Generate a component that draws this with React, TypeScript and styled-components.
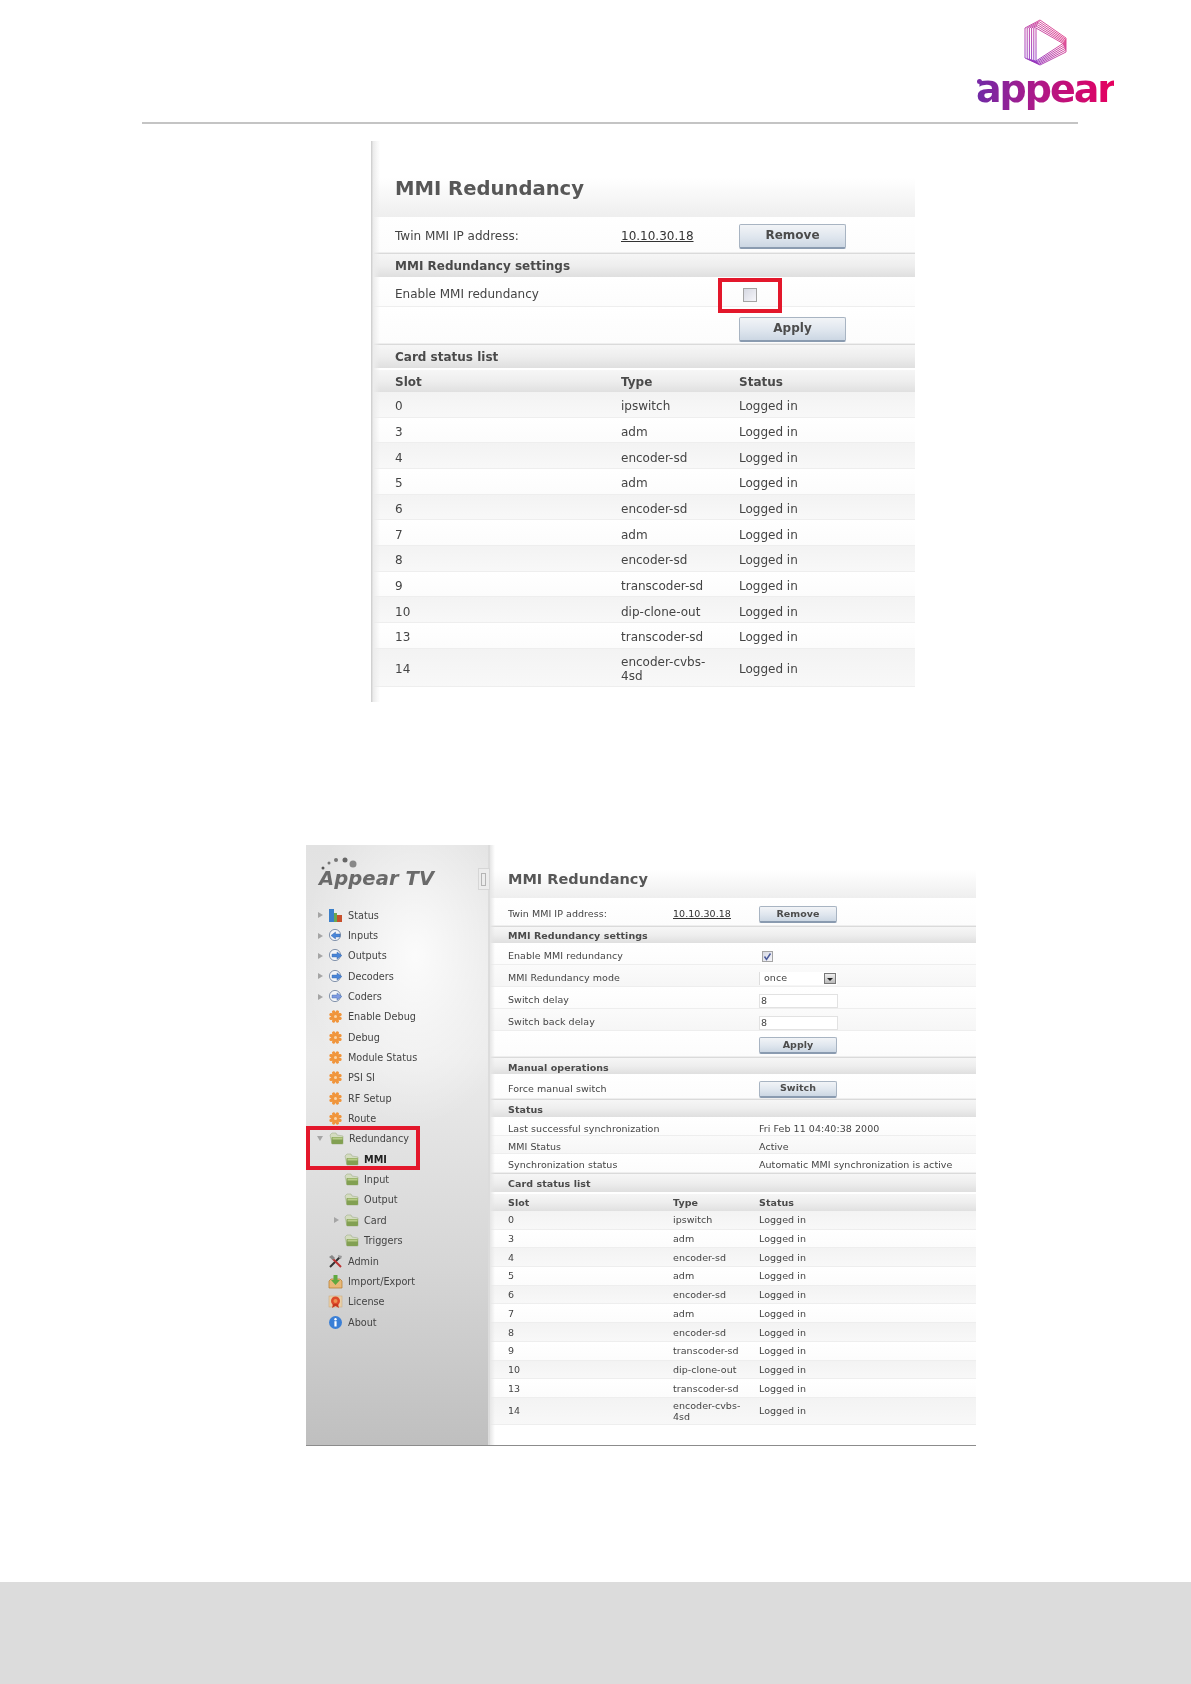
import React from "react";
import styled, { createGlobalStyle, ThemeProvider } from "styled-components";

const Global = createGlobalStyle`
  html, body { margin: 0; padding: 0; background: #fff; }
  body { font-family: "DejaVu Sans", Verdana, sans-serif; }
`;

const big = { font: 12, letter: 0, title: 19.6, titleLift: 18, pad: 24, col1: 226, col2: 118, typeMax: 100, btnW: 107, btnH: 25, btnFont: 12, valueShift: 118 };
const small = { font: 9.5, letter: 0.05, title: 14.5, titleLift: 10, pad: 18, col1: 165, col2: 86, typeMax: 80, btnW: 78, btnH: 17, btnFont: 9.5, valueShift: 86 };

const Page = styled.div`
  width: 1191px;
  height: 1684px;
  display: flex;
  flex-direction: column;
  overflow: hidden;
`;
const Header = styled.header`
  height: 124px;
  margin: 0 113px 0 142px;
  padding: 19px 0 0;
  box-sizing: border-box;
  border-bottom: 2px solid #c4c4c4;
  display: flex;
  justify-content: flex-end;
`;
const Brand = styled.div`
  margin-right: -37px;
  width: 140px;
  display: flex;
  flex-direction: column;
  align-items: center;
  position: relative;
`;
const Word = styled.div`
  font-family: "DejaVu Sans", sans-serif;
  font-weight: 700;
  font-size: 38px;
  line-height: 44px;
  margin-top: 1px;
  letter-spacing: -2px;
  background: linear-gradient(90deg, #6f2aa6 0%, #a81b8c 40%, #e6005e 100%);
  -webkit-background-clip: text;
  background-clip: text;
  color: transparent;
`;
const BrandDot = styled.span`
  position: absolute;
  left: 2px;
  top: 60px;
  width: 5px;
  height: 5px;
  border-radius: 50%;
  background: #7a2aa6;
`;

const TopShot = styled.section`
  position: relative;
  margin: 17px 0 0 371px;
  width: 544px;
  height: 561px;
  padding-top: 37px;
  box-sizing: border-box;
  filter: blur(0.35px);
  &::before {
    content: "";
    position: absolute;
    left: 0; top: 0; bottom: 0;
    width: 9px;
    background: linear-gradient(90deg, #c9c9c9 0, #ececec 25%, rgba(255,255,255,0) 100%);
    pointer-events: none;
    z-index: 2;
  }
`;
const LowerShot = styled.section`
  position: relative;
  margin: 143px 0 0 306px;
  width: 670px;
  height: 600px;
  display: flex;
  border-bottom: 1px solid #8c8c8c;
  filter: blur(0.3px);
`;
const Sidebar = styled.nav`
  width: 184px;
  flex: none;
  box-sizing: border-box;
  padding-top: 60px;
  background:
    radial-gradient(ellipse 110px 170px at 60% 110px, rgba(255,255,255,0.85), rgba(255,255,255,0) 100%),
    linear-gradient(180deg, #e2e2e2 0%, #ebebeb 35%, #d6d6d6 70%, #bfbfbf 100%);
  border-right: 2px solid #dcdcdc;
  position: relative;
`;
const SideLogo = styled.div`
  position: absolute;
  left: 13px;
  top: 21px;
  font-family: "DejaVu Sans", sans-serif;
  font-weight: 700;
  font-style: italic;
  font-size: 19.5px;
  line-height: 26px;
  letter-spacing: 0.1px;
  color: #6a6a6a;
`;
const LogoDots = styled.svg`
  position: absolute;
  left: 15px;
  top: 12px;
`;
const Handle = styled.div`
  position: absolute;
  right: -2px;
  top: 23px;
  width: 12px;
  height: 22px;
  box-sizing: border-box;
  border: 1px solid #d6d6d6;
  background: #ececec;
  &::after {
    content: "";
    position: absolute;
    left: 2px; top: 4px;
    width: 3px; height: 11px;
    border: 1px solid #b4b4b4;
  }
`;
const NavRow = styled.div<{ $level: number }>`
  height: 20.35px;
  display: flex;
  align-items: center;
  padding-left: ${(p) => 11 + p.$level * 16}px;
  font-size: 9.7px;
  color: #3f3f3f;
`;
const Arrow = styled.span<{ $open?: boolean; $hidden?: boolean }>`
  width: 0;
  height: 0;
  flex: none;
  margin-right: 6px;
  visibility: ${(p) => (p.$hidden ? "hidden" : "visible")};
  ${(p) =>
    p.$open
      ? "border-left:3px solid transparent;border-right:3px solid transparent;border-top:5px solid #a5a5a5;"
      : "border-top:3px solid transparent;border-bottom:3px solid transparent;border-left:5px solid #a5a5a5;margin-left:1px;margin-right:5px;"}
`;
const NavIcon = styled.svg`
  width: 15px;
  height: 15px;
  flex: none;
  margin-right: 5px;
`;
const NavLabel = styled.span<{ $bold?: boolean }>`
  font-weight: ${(p) => (p.$bold ? 700 : 400)};
  color: ${(p) => (p.$bold ? "#222" : "#444")};
  white-space: nowrap;
`;

const Content = styled.div`
  position: relative;
  flex: 1;
  padding-top: 25px;
  min-width: 0;
  background: #fff;
  &::before {
    content: "";
    position: absolute;
    left: 0; top: 0; bottom: 0;
    width: 5px;
    background: linear-gradient(90deg, #e6e6e6, rgba(255,255,255,0));
    pointer-events: none;
  }
`;
const Title = styled.div<{ $h: number }>`
  height: ${(p) => p.$h}px;
  box-sizing: border-box;
  display: flex;
  align-items: center;
  padding-left: ${(p) => p.theme.pad}px;
  padding-bottom: ${(p) => p.theme.titleLift}px;
  font-weight: 700;
  font-size: ${(p) => p.theme.title}px;
  color: #575757;
  background: linear-gradient(180deg, #fff 0%, #f6f6f6 55%, #eeeeee 100%);
`;
const Row = styled.div<{ $h: number; $n?: number; $tone?: "plain" | "alt" | "none" }>`
  height: ${(p) => p.$h}px;
  display: grid;
  grid-template-columns: ${(p) => p.theme.col1}px ${(p) => p.theme.col2}px 1fr;
  align-items: center;
  padding-left: ${(p) => p.theme.pad}px;
  padding-top: ${(p) => (p.$n ?? 0) * 2}px;
  box-sizing: border-box;
  font-size: ${(p) => p.theme.font}px;
  letter-spacing: ${(p) => p.theme.letter}px;
  line-height: 1.15;
  color: #444;
  border-bottom: 1px solid #eeeeee;
  background: ${(p) =>
    p.$tone === "alt"
      ? "linear-gradient(180deg, #f3f3f3 0%, #f8f8f8 100%)"
      : p.$tone === "none"
      ? "linear-gradient(180deg, #fbfbfb 0%, #f6f6f6 100%)"
      : "linear-gradient(180deg, #ffffff 0%, #fcfcfc 100%)"};
`;
const Section = styled.div<{ $h: number; $n?: number }>`
  height: ${(p) => p.$h}px;
  display: flex;
  align-items: center;
  box-sizing: border-box;
  padding-left: ${(p) => p.theme.pad}px;
  padding-top: ${(p) => (p.$n ?? 0) * 2}px;
  font-weight: 700;
  font-size: ${(p) => p.theme.font}px;
  letter-spacing: ${(p) => p.theme.letter}px;
  color: #4a4a4a;
  border-top: 1px solid #dadada;
  background: linear-gradient(180deg, #f6f6f6 0%, #eeeeee 50%, #dfdfdf 100%);
`;
const HeadRow = styled(Row)`
  font-weight: 700;
  border-top: 2px solid #fff;
  border-bottom: none;
  color: #4a4a4a;
  background: linear-gradient(180deg, #f6f6f6 0%, #eeeeee 50%, #e0e0e0 100%);
`;
const Cell = styled.span``;
const TypeCell = styled.span`
  max-width: ${(p) => p.theme.typeMax}px;
`;
const WideCell = styled.span`
  grid-column: 3;
`;
const FullValue = styled.span`
  grid-column: 2 / 4;
  padding-left: ${(p) => p.theme.valueShift}px;
  white-space: nowrap;
`;
const Address = styled.span`
  text-decoration: underline;
  color: #333;
`;
const Button = styled.div`
  grid-column: 3;
  width: ${(p) => p.theme.btnW}px;
  height: ${(p) => p.theme.btnH}px;
  box-sizing: border-box;
  display: flex;
  align-items: center;
  justify-content: center;
  font-weight: 700;
  font-size: ${(p) => p.theme.btnFont}px;
  color: #4c4c4c;
  border: 1px solid #a8b4c2;
  border-bottom: 2px solid #8a9bb0;
  border-radius: 2px;
  background: linear-gradient(180deg, #f2f4f7 0%, #dfe6ee 55%, #ccd7e3 100%);
`;
const Check = styled.span<{ $size: number; $shift: number }>`
  grid-column: 3;
  margin-left: ${(p) => p.$shift}px;
  width: ${(p) => p.$size}px;
  height: ${(p) => p.$size}px;
  box-sizing: border-box;
  border: 1px solid #a4a4a4;
  background: linear-gradient(135deg, #d6d8e2, #f6f6fa);
  display: flex;
  align-items: center;
  justify-content: center;
`;
const Select = styled.div`
  grid-column: 3;
  width: 78px;
  height: 13px;
  box-sizing: border-box;
  display: flex;
  align-items: center;
  justify-content: space-between;
  padding: 0 1px 0 4px;
  background: #fff;
  border-left: 1px solid #ddd;
  font-size: 9.5px;
`;
const SelectBtn = styled.span`
  width: 12px;
  height: 11px;
  box-sizing: border-box;
  border: 1px solid #777;
  background: linear-gradient(180deg, #eee, #bbb);
  display: flex;
  align-items: center;
  justify-content: center;
  &::after {
    content: "";
    border-left: 3px solid transparent;
    border-right: 3px solid transparent;
    border-top: 3px solid #222;
    margin-top: 2px;
  }
`;
const Field = styled.div`
  grid-column: 3;
  width: 79px;
  height: 14px;
  box-sizing: border-box;
  border: 1px solid #e2e2e2;
  background: #fff;
  padding-left: 1px;
  line-height: 12px;
  font-size: 9.5px;
`;
const RedBox = styled.div`
  position: absolute;
  border: 4px solid #e3172b;
  box-sizing: border-box;
  z-index: 3;
  pointer-events: none;
`;
const TopRedBox = styled(RedBox)`
  left: 347px;
  top: 137px;
  width: 64px;
  height: 35px;
`;
const NavRedBox = styled(RedBox)`
  left: 0;
  top: 281px;
  width: 114px;
  height: 44px;
`;
const Footer = styled.footer`
  margin-top: auto;
  height: 102px;
  background: #dcdcdc;
`;

const burst = Array.from({ length: 8 }, (_, i) => {
  const a = (i * Math.PI) / 4 + Math.PI / 8;
  return `M7.5 7.5L${(7.5 + 5 * Math.cos(a)).toFixed(1)} ${(7.5 + 5 * Math.sin(a)).toFixed(1)}`;
}).join("");

type Kind = "bars" | "in" | "out" | "coder" | "gear" | "folder" | "tools" | "box" | "cert" | "info";

function Icon({ kind }: { kind: Kind }) {
  return (
    <NavIcon viewBox="0 0 15 15">
      {kind === "bars" && (
        <>
          <rect x="1" y="1" width="5" height="13" fill="#3b7fc9" />
          <rect x="6" y="5" width="3" height="9" fill="#6aa84f" />
          <rect x="9" y="7" width="5" height="7" fill="#c8502c" />
        </>
      )}
      {(kind === "in" || kind === "out" || kind === "coder") && (
        <>
          <circle cx="7" cy="7" r="5.6" fill="#f2f4f8" stroke="#8494ac" strokeWidth="1" />
          <path
            d={kind === "in" ? "M12 6H7.500V4L3 7.500l4.500 3.500V9H12z" : "M4 6h5V4l5 3.500-5 3.500V9H4z"}
            fill={kind === "coder" ? "#7f9be0" : "#4a86d8"}
            stroke="#2f5fa8"
            strokeWidth="0.4"
          />
        </>
      )}
      {kind === "gear" && (
        <>
          <path d={burst} stroke="#f0953c" strokeWidth="3.200" strokeLinecap="round" />
          <circle cx="7.5" cy="7.5" r="1.500" fill="#fbd6a8" />
        </>
      )}
      {kind === "folder" && (
        <>
          <path d="M1 4l2-2 4 0 1 2 6 1v8H3z" fill="#d4dcc0" stroke="#98a880" strokeWidth="0.5" />
          <rect x="2.5" y="6" width="11.5" height="7" rx="1" fill="#82a052" />
          <rect x="3.5" y="6.5" width="10" height="2" fill="#b8cc88" />
        </>
      )}
      {kind === "tools" && (
        <>
          <path d="M2 13L12 3" stroke="#333" strokeWidth="2" />
          <path d="M13 13L4 4" stroke="#b33" strokeWidth="2" />
          <path d="M1 3l3-2 3 3-2 2z" fill="#888" />
          <path d="M10 1l4 1-1 3-2-1z" fill="#999" />
        </>
      )}
      {kind === "box" && (
        <>
          <path d="M1 7l2-2h9l2 2v7H1z" fill="#e8b878" stroke="#b57a2a" strokeWidth="0.7" />
          <path d="M5.500 1h4v5h2.500l-4.500 5-4.500-5h2.500z" fill="#5fa83f" />
        </>
      )}
      {kind === "cert" && (
        <>
          <rect x="1" y="2" width="13" height="11" fill="#e8cfa8" stroke="#c9a678" strokeWidth="0.5" />
          <circle cx="7.500" cy="7" r="4.500" fill="#dc4a2a" />
          <circle cx="7.500" cy="7" r="2" fill="#f09050" />
          <path d="M5 10l-1 4 3.500-2 3.500 2-1-4z" fill="#c8371e" />
        </>
      )}
      {kind === "info" && (
        <>
          <circle cx="7.5" cy="7.5" r="6.5" fill="#3a7fd6" />
          <circle cx="7.5" cy="4.2" r="1.2" fill="#fff" />
          <rect x="6.4" y="6.2" width="2.2" height="5.300" fill="#fff" />
        </>
      )}
    </NavIcon>
  );
}

const nav: { label: string; kind: Kind; level?: number; arrow?: boolean; open?: boolean; bold?: boolean }[] = [
  { label: "Status", kind: "bars", arrow: true },
  { label: "Inputs", kind: "in", arrow: true },
  { label: "Outputs", kind: "out", arrow: true },
  { label: "Decoders", kind: "out", arrow: true },
  { label: "Coders", kind: "coder", arrow: true },
  { label: "Enable Debug", kind: "gear" },
  { label: "Debug", kind: "gear" },
  { label: "Module Status", kind: "gear" },
  { label: "PSI SI", kind: "gear" },
  { label: "RF Setup", kind: "gear" },
  { label: "Route", kind: "gear" },
  { label: "Redundancy", kind: "folder", arrow: true, open: true },
  { label: "MMI", kind: "folder", level: 1, bold: true },
  { label: "Input", kind: "folder", level: 1 },
  { label: "Output", kind: "folder", level: 1 },
  { label: "Card", kind: "folder", level: 1, arrow: true },
  { label: "Triggers", kind: "folder", level: 1 },
  { label: "Admin", kind: "tools" },
  { label: "Import/Export", kind: "box" },
  { label: "License", kind: "cert" },
  { label: "About", kind: "info" },
];

const cards: [string, string][] = [
  ["0", "ipswitch"],
  ["3", "adm"],
  ["4", "encoder-sd"],
  ["5", "adm"],
  ["6", "encoder-sd"],
  ["7", "adm"],
  ["8", "encoder-sd"],
  ["9", "transcoder-sd"],
  ["10", "dip-clone-out"],
  ["13", "transcoder-sd"],
  ["14", "encoder-cvbs-4sd"],
];

function CardRows({ h, last, n }: { h: number; last: number; n: number }) {
  return (
    <>
      {cards.map(([slot, type], i) => (
        <Row key={slot} $h={i === cards.length - 1 ? last : h} $n={n} $tone={i % 2 === 0 ? "alt" : "plain"}>
          <Cell>{slot}</Cell>
          <TypeCell>{type}</TypeCell>
          <Cell>Logged in</Cell>
        </Row>
      ))}
    </>
  );
}

function LogoMark() {
  const outer = [[1, 9], [16, 1], [42, 19], [42, 33], [16, 46], [1, 39]];
  const inner = [[12, 9], [12, 9], [39, 24.500], [39, 24.500], [12, 42], [12, 42]];
  const lines = [0, 0.2, 0.4, 0.6, 0.8, 1].map((t) =>
    outer.map((p, i) => `${(p[0] + (inner[i][0] - p[0]) * t).toFixed(1)},${(p[1] + (inner[i][1] - p[1]) * t).toFixed(1)}`).join(" ")
  );
  return (
    <svg width="43" height="47" viewBox="0 0 43 47" fill="none">
      <defs>
        <linearGradient id="lg" x1="0" y1="1" x2="1" y2="0">
          <stop offset="0" stopColor="#8a2fc0" />
          <stop offset="1" stopColor="#f2407c" />
        </linearGradient>
      </defs>
      {lines.map((pts) => (
        <polygon key={pts} points={pts} stroke="url(#lg)" strokeWidth="0.9" strokeLinejoin="round" />
      ))}
    </svg>
  );
}

export default function App() {
  return (
    <Page>
      <Global />
      <Header>
        <Brand>
          <LogoMark />
          <Word>appear</Word>
          <BrandDot />
        </Brand>
      </Header>

      <ThemeProvider theme={big}>
        <TopShot>
          <Title $h={39}>MMI Redundancy</Title>
          <Row $h={36} $n={2}>
            <Cell>Twin MMI IP address:</Cell>
            <Address>10.10.30.18</Address>
            <Button>Remove</Button>
          </Row>
          <Section $h={24}>MMI Redundancy settings</Section>
          <Row $h={30} $n={3}>
            <Cell>Enable MMI redundancy</Cell>
            <Cell />
            <Check $size={14} $shift={4} />
          </Row>
          <Row $h={37} $n={4} $tone="plain">
            <Cell />
            <Cell />
            <Button>Apply</Button>
          </Row>
          <Section $h={24}>Card status list</Section>
          <HeadRow $h={24} $n={2}>
            <Cell>Slot</Cell>
            <Cell>Type</Cell>
            <Cell>Status</Cell>
          </HeadRow>
          <CardRows h={25.67} last={38} n={3} />
          <TopRedBox />
        </TopShot>
      </ThemeProvider>

      <ThemeProvider theme={small}>
        <LowerShot>
          <Sidebar>
            <LogoDots width="40" height="14" viewBox="0 0 40 14">
              <circle cx="2" cy="11" r="1.500" fill="#555" />
              <circle cx="8" cy="6" r="1.500" fill="#777" />
              <circle cx="15" cy="3" r="2" fill="#777" />
              <circle cx="24" cy="3" r="2.500" fill="#666" />
              <circle cx="32" cy="7" r="3.500" fill="#888" />
            </LogoDots>
            <SideLogo>Appear TV</SideLogo>
            <Handle />
            {nav.map((n) => (
              <NavRow key={n.label} $level={n.level ?? 0}>
                <Arrow $open={n.open} $hidden={!n.arrow} />
                <Icon kind={n.kind} />
                <NavLabel $bold={n.bold}>{n.label}</NavLabel>
              </NavRow>
            ))}
            <NavRedBox />
          </Sidebar>
          <Content>
            <Title $h={28}>MMI Redundancy</Title>
            <Row $h={28} $n={3}>
              <Cell>Twin MMI IP address:</Cell>
              <Address>10.10.30.18</Address>
              <Button>Remove</Button>
            </Row>
            <Section $h={17}>MMI Redundancy settings</Section>
            <Row $h={22} $n={3}>
              <Cell>Enable MMI redundancy</Cell>
              <Cell />
              <Check $size={11} $shift={3}>
                <svg width="9" height="9" viewBox="0 0 9 9" fill="none">
                  <path d="M1.500 4.500l2 3 4-6" stroke="#4a5a9a" strokeWidth="1.500" />
                </svg>
              </Check>
            </Row>
            <Row $h={22} $n={3} $tone="none">
              <Cell>MMI Redundancy mode</Cell>
              <Cell />
              <Select>
                once
                <SelectBtn />
              </Select>
            </Row>
            <Row $h={22} $n={3}>
              <Cell>Switch delay</Cell>
              <Cell />
              <Field>8</Field>
            </Row>
            <Row $h={22} $n={3} $tone="none">
              <Cell>Switch back delay</Cell>
              <Cell />
              <Field>8</Field>
            </Row>
            <Row $h={26} $n={2}>
              <Cell />
              <Cell />
              <Button>Apply</Button>
            </Row>
            <Section $h={17} $n={1}>Manual operations</Section>
            <Row $h={25} $n={3}>
              <Cell>Force manual switch</Cell>
              <Cell />
              <Button>Switch</Button>
            </Row>
            <Section $h={18} $n={1}>Status</Section>
            <Row $h={19} $n={3}>
              <Cell>Last successful synchronization</Cell>
              <Cell />
              <WideCell>Fri Feb 11 04:40:38 2000</WideCell>
            </Row>
            <Row $h={18} $n={3} $tone="none">
              <Cell>MMI Status</Cell>
              <Cell />
              <WideCell>Active</WideCell>
            </Row>
            <Row $h={19} $n={2}>
              <Cell>Synchronization status</Cell>
              <FullValue>Automatic MMI synchronization is active</FullValue>
            </Row>
            <Section $h={19}>Card status list</Section>
            <HeadRow $h={19} $n={1}>
              <Cell>Slot</Cell>
              <Cell>Type</Cell>
              <Cell>Status</Cell>
            </HeadRow>
            <CardRows h={18.7} last={27} n={1} />
          </Content>
        </LowerShot>
      </ThemeProvider>

      <Footer />
    </Page>
  );
}
